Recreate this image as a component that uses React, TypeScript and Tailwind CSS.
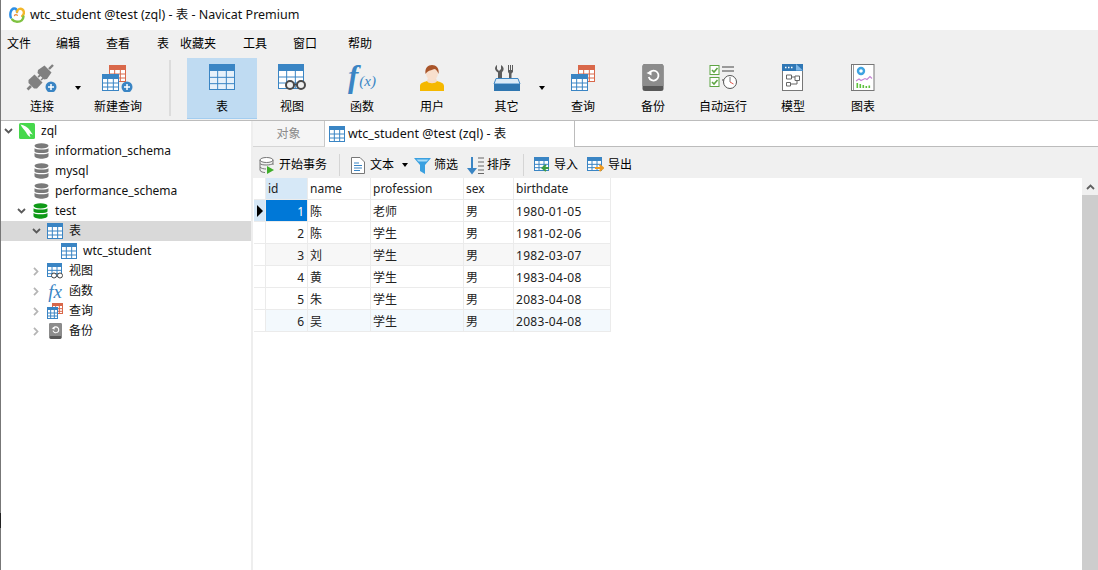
import type { ReactNode } from 'react'

const BLUE = '#3a85c4'
const RED = '#d9684a'

// table glyph used all over the app, header band + grid
function GridGlyph({ x = 0, y = 0, w = 26, h = 26, color = BLUE, fill = '#ffffff' }: { x?: number; y?: number; w?: number; h?: number; color?: string; fill?: string }) {
  const head = Math.round(h * 0.27)
  const rowH = (h - head) / 3
  const colW = w / 3
  return (
    <g>
      <rect x={x + 0.5} y={y + 0.5} width={w - 1} height={h - 1} fill={fill} stroke={color} />
      <path d={`M${x} ${y + head}v${-head + 2}a2 2 0 0 1 2 -2h${w - 4}a2 2 0 0 1 2 2v${head - 2}z`} fill={color} />
      <path
        d={`M${x + colW} ${y + head}V${y + h}M${x + colW * 2} ${y + head}V${y + h}M${x} ${y + head + rowH}H${x + w}M${x} ${y + head + rowH * 2}H${x + w}`}
        stroke={color}
        strokeWidth={1}
        fill="none"
      />
    </g>
  )
}

function PlusBadge({ cx, cy }: { cx: number; cy: number }) {
  return (
    <g>
      <circle cx={cx} cy={cy} r={5.5} fill="#3a85c4" />
      <path d={`M${cx - 3} ${cy}h6M${cx} ${cy - 3}v6`} stroke="#fff" strokeWidth={1.5} />
    </g>
  )
}

function TableIcon({ size = 26, fill = '#ffffff' }: { size?: number; fill?: string }) {
  return (
    <svg width={size} height={size} viewBox={`0 0 ${size} ${size}`}>
      <GridGlyph w={size} h={size} fill={fill} />
    </svg>
  )
}

function ConnectIcon() {
  return (
    <svg width={32} height={28} viewBox="0 0 32 28">
      <g fill="#808080">
        <path d="M12 6 18.500 1.500 25.500 8.500 21 15 18 15.500 11.500 9Z" />
        <path d="M23 5 27 1" stroke="#808080" strokeWidth={2.4} />
        <path d="M2.500 16 8.500 10.500 16.500 18.500 11 24.500 8 24.500 2.500 19Z" />
        <path d="M12 13 16.500 9.500M15 16 19 12.500" stroke="#808080" strokeWidth={1.6} />
        <path d="M5 22 1.500 25.500" stroke="#808080" strokeWidth={2.6} />
      </g>
      <PlusBadge cx={25} cy={23} />
    </svg>
  )
}

function NewQueryIcon() {
  return (
    <svg width={32} height={28} viewBox="0 0 32 28">
      <GridGlyph x={7} y={1} w={17} h={17} color={RED} />
      <GridGlyph x={0} y={10} w={17} h={17} />
      <PlusBadge cx={25} cy={23} />
    </svg>
  )
}

function ViewIcon() {
  return (
    <svg width={28} height={28} viewBox="0 0 28 28">
      <GridGlyph w={26} h={25} />
      <circle cx={12} cy={21} r={4} fill="#f0f0f0" stroke="#4a4a4a" strokeWidth={2} />
      <circle cx={23} cy={21} r={4} fill="#f0f0f0" stroke="#4a4a4a" strokeWidth={2} />
      <path d="M16 20.500h3" stroke="#4a4a4a" strokeWidth={1.6} />
    </svg>
  )
}

function FuncIcon() {
  return (
    <div className="flex items-end h-7 text-[#3a85c4] font-['Liberation_Serif',serif] italic leading-none">
      <span className="text-[31px] font-bold">f</span>
      <span className="text-[15px] mb-[3px] ml-[1px]">(x)</span>
    </div>
  )
}

function UserIcon() {
  return (
    <svg width={26} height={28} viewBox="0 0 26 28">
      <path d="M1 27v-5c0-3 4-4 7-5h10c3 1 7 2 7 5v5z" fill="#f5b800" />
      <path d="M8 17c1 3 9 3 10 0l-1-3H9z" fill="#f6dcc8" />
      <ellipse cx={13} cy={9} rx={6} ry={7.5} fill="#f8dfcd" />
      <path d="M6.500 10C5.500 4 9 1 13 1s7.500 3 6.500 9c-1-3-2.500-5-4.500-5-2 1.500-6 1-8.500 5z" fill="#a9552a" />
    </svg>
  )
}

function ToolsIcon() {
  return (
    <svg width={28} height={28} viewBox="0 0 28 28">
      <path d="M4 1v4l2 2 2-2V1c2 1 3 3 2.500 5-.3 1-1.500 2-1.500 2.500V20H5V8.500C3.500 7.500 2 6 2 4.500 2 3 3 1.500 4 1z" fill="#5c5c5c" />
      <path d="M15 1h1v5h1V1h1v5h1V1h1v7l-1.500 1.500V20h-2.500V9.500L15 8z" fill="#5c5c5c" />
      <path d="M3 14.500H25L27 20H1z" fill="#dcebf7" stroke="#3a85c4" />
      <rect x={1} y={20} width={26} height={7} fill="#2f76b0" />
    </svg>
  )
}

function QueryIcon({ small }: { small?: boolean }) {
  if (small) {
    return (
      <svg width={16} height={16} viewBox="0 0 16 16">
        <GridGlyph x={5} y={0} w={11} h={11} color={RED} />
        <GridGlyph x={0} y={4} w={11} h={12} />
      </svg>
    )
  }
  return (
    <svg width={26} height={28} viewBox="0 0 26 28">
      <GridGlyph x={8} y={1} w={17} h={17} color={RED} />
      <GridGlyph x={1} y={10} w={17} h={17} />
    </svg>
  )
}

function BackupIcon({ size = 22 }: { size?: number }) {
  return (
    <svg width={size} height={(size * 27) / 22} viewBox="0 0 22 27">
      <rect x={0.5} width={21} height={27} rx={2.500} fill="#585858" />
      <path d="M3 0h16a2.500 2.500 0 0 1 2.500 2.500V22H.5V2.500A2.500 2.500 0 0 1 3 0z" fill="#8c8c8c" />
      <path d="M7.500 8.500a5 5 0 1 1-.8 4.500" fill="none" stroke="#fff" strokeWidth={1.8} />
      <path d="M4.500 9 9.500 6.500 9.500 11.500z" fill="#fff" />
    </svg>
  )
}

function AutoRunIcon() {
  const box = (y: number) => (
    <g>
      <rect x={1} y={y} width={9} height={9} fill="#fff" stroke="#5fa544" />
      <path d={`M3 ${y + 4.500}l2 2 3.500-4`} fill="none" stroke="#5fa544" strokeWidth={1.6} />
    </g>
  )
  return (
    <svg width={28} height={26} viewBox="0 0 28 26">
      {box(1.5)}
      {box(13.5)}
      <path d="M13 3h12M13 7h12M13 16h2" stroke="#9a9a9a" strokeWidth={1.8} />
      <circle cx={21} cy={18} r={6.500} fill="#fff" stroke="#555" />
      <path d="M21 13v5" stroke="#777" />
      <path d="M21 18l3.500 2" stroke="#e4574c" />
    </svg>
  )
}

function ModelIcon() {
  return (
    <svg width={22} height={27} viewBox="0 0 22 27">
      <rect x={0.5} y={0.5} width={20} height={26} fill="#fff" stroke="#777" />
      <rect width={21} height={7} fill="#2f77b5" />
      <path d="M14 0l7 6.500h-7z" fill="#7db6e6" />
      <path d="M3 3.500h1.500M6 3.500h1.500M9 3.500h1.500" stroke="#fff" strokeWidth={1.400} />
      <path d="M4.500 11h5v4h-5zM13 12h4.500v4.500H13zM4.500 18.500h4v3.500h-4z" fill="#fff" stroke="#666" />
      <path d="M9.500 13H13M15 16.500v3.500H8.500" fill="none" stroke="#666" />
    </svg>
  )
}

function ChartIcon() {
  return (
    <svg width={24} height={27} viewBox="0 0 24 27">
      <rect x={0.5} y={0.5} width={22.500} height={26} fill="#fff" stroke="#777" />
      <path d="M2.500 1v25" stroke="#999" />
      <circle cx={10} cy={7} r={3} fill="none" stroke="#3ea3e0" strokeWidth={2.400} />
      <path d="M5 17l3-2 2 1.500 4-2 2 1 3-3 2 2" fill="none" stroke="#c583d4" strokeWidth={1.100} />
      <path d="M5.500 19h1.600v5H5.500zM8.500 20h1.600v4H8.500zM11.500 21h1.600v3h-1.600zM14.500 22h1.600v2h-1.600zM17.500 21.500h1.600V24h-1.600z" fill="#5ec23c" />
    </svg>
  )
}

function AppLogo() {
  return (
    <svg width={16} height={16} viewBox="0 0 16 16" fill="none" strokeWidth={2.4} strokeLinecap="round">
      <path d="M1.800 10.500C.5 6.500 2 1.800 5 1.500c2-.2 3 1.200 3 3.500" stroke="#2d8fe6" />
      <path d="M8 5c.3-3 3.500-4.200 5.500-2.500 2 1.800 1.800 5-.3 6.500" stroke="#f3b72a" />
      <path d="M14.500 9.500c-.3 3.500-3 5.300-6.500 5.300-2 0-3.700-.8-4.800-2.300" stroke="#7fc241" />
      <path d="M5.500 8.500c.8-1 2-1 2.800-.3" stroke="#f08a3c" strokeWidth={1.300} />
    </svg>
  )
}

function DbIcon({ color }: { color: string }) {
  return (
    <svg width={15} height={16} viewBox="0 0 15 16">
      <ellipse cx={7.500} cy={2.800} rx={7} ry={2.600} fill={color} />
      <path d="M.5 5.200c1 1.800 13 1.800 14 0v3.200c-1 2-13 2-14 0z" fill={color} />
      <path d="M.5 10c1 1.800 13 1.800 14 0v3.200c-1 3.300-13 3.300-14 0z" fill={color} />
    </svg>
  )
}

function MysqlIcon() {
  return (
    <svg width={16} height={16} viewBox="0 0 16 16">
      <rect width={16} height={16} rx={1.500} fill="#46d84c" />
      <path d="M1.500 1.500C5 2 9 4 11 7.500c.5 1 1.500 2.500 3 4-1.500 0-2.500-.5-3.500-1.200.2 1.200.4 2.500 1 4-2-1-3.500-3-4.500-5C5.500 7 3 5 1.500 1.500z" fill="#fff" />
    </svg>
  )
}

function SmallViewIcon() {
  return (
    <svg width={16} height={16} viewBox="0 0 16 16">
      <GridGlyph w={15} h={14} />
      <circle cx={7} cy={12.500} r={2.500} fill="#fff" stroke="#444" />
      <circle cx={13} cy={12.500} r={2.500} fill="#fff" stroke="#444" />
    </svg>
  )
}

function Chevron({ open }: { open?: boolean }) {
  return open ? (
    <svg width={9} height={6} viewBox="0 0 9 6">
      <path d="M1 1l3.500 3.500L8 1" fill="none" stroke="#5a5a5a" strokeWidth={1.800} />
    </svg>
  ) : (
    <svg width={6} height={9} viewBox="0 0 6 9">
      <path d="M1 .8 4.500 4.500 1 8.200" fill="none" stroke="#b5b5b5" strokeWidth={1.800} />
    </svg>
  )
}

function Caret() {
  return <div className="w-0 h-0 border-x-[3.5px] border-x-transparent border-t-[4px] border-t-black" />
}

function ToolButton({ icon, label, width = 'w-[70px]', active }: { icon: ReactNode; label: string; width?: string; active?: boolean }) {
  return (
    <div className={`${width} h-[61px] shrink-0 flex flex-col items-center ${active ? 'bg-[#bfdbf2] border-b border-b-[#a3cdf0]' : ''}`}>
      <div className="h-[36px] pt-[6px] flex items-start justify-center">{icon}</div>
      <div className="mt-[5px] text-[12px] leading-[16px] text-black whitespace-nowrap">{label}</div>
    </div>
  )
}

function TreeRow({ pad, chevron, icon, label, gap = 'ml-[6px]', selected }: { pad: string; chevron?: ReactNode; icon: ReactNode; label: string; gap?: string; selected?: boolean }) {
  return (
    <div className={`h-5 flex items-center ${pad} ${selected ? 'bg-[#d9d9d9]' : ''}`}>
      {chevron && <div className="w-4 pr-[6px] flex justify-center">{chevron}</div>}
      <div className="w-4 flex justify-center">{icon}</div>
      <span className={`${gap} text-[12px] leading-5 text-[#111] whitespace-nowrap`}>{label}</span>
    </div>
  )
}

const menus = [
  { t: '文件', w: 'w-[49px]' },
  { t: '编辑', w: 'w-[50px]' },
  { t: '查看', w: 'w-[51px]' },
  { t: '表', w: 'w-[23px]' },
  { t: '收藏夹', w: 'w-[63px]' },
  { t: '工具', w: 'w-[50px]' },
  { t: '窗口', w: 'w-[55px]' },
  { t: '帮助', w: 'w-[49px]' },
]

const columns = ['id', 'name', 'profession', 'sex', 'birthdate']

const rows = [
  { id: 1, name: '陈', job: '老师', sex: '男', date: '1980-01-05', bg: '' },
  { id: 2, name: '陈', job: '学生', sex: '男', date: '1981-02-06', bg: '' },
  { id: 3, name: '刘', job: '学生', sex: '男', date: '1982-03-07', bg: 'bg-[#f7f7f7]' },
  { id: 4, name: '黄', job: '学生', sex: '男', date: '1983-04-08', bg: '' },
  { id: 5, name: '朱', job: '学生', sex: '男', date: '2083-04-08', bg: '' },
  { id: 6, name: '吴', job: '学生', sex: '男', date: '2083-04-08', bg: 'bg-[#f3f9fd]' },
]

const cell = 'h-[22px] border-r border-b border-[#ebebeb] pl-[2px] text-[12px] text-[#222] whitespace-nowrap overflow-hidden'

export default function App() {
  return (
    <div className="w-[1098px] h-[570px] flex overflow-hidden bg-white font-['Noto_Sans','Noto_Sans_CJK_SC',sans-serif]">
      <div className="w-px h-full bg-[#777] shrink-0">
        <div className="mt-[513px] h-[15px] bg-[#222]" />
      </div>

      <div className="flex-1 min-w-0 flex flex-col">
        {/* title bar */}
        <div className="h-[30px] shrink-0 flex items-center pl-[8px] bg-white">
          <AppLogo />
          <span className="ml-[5px] text-[12.5px] text-[#111] whitespace-nowrap">wtc_student @test (zql) - 表 - Navicat Premium</span>
        </div>

        {/* menu */}
        <div className="h-[26px] shrink-0 flex items-center pl-[6px] pt-[2px] bg-[#f0f0f0]">
          {menus.map(m => (
            <div key={m.t} className={`${m.w} shrink-0 text-[12px] text-black`}>{m.t}</div>
          ))}
        </div>

        {/* main toolbar */}
        <div className="h-[65px] shrink-0 flex items-start pt-[2px] pl-[9px] bg-[#f0f0f0] border-b border-b-[#bcbcbc]">
          <ToolButton icon={<ConnectIcon />} label="连接" width="w-[64px]" />
          <div className="w-[9px] pr-[2px] h-[61px] shrink-0 flex justify-center pt-[28px]"><Caret /></div>
          <ToolButton icon={<NewQueryIcon />} label="新建查询" />
          <div className="w-[2px] h-[56px] mt-[2px] ml-[16px] mr-[16px] shrink-0 bg-[#dcdcdc]" />
          <ToolButton icon={<TableIcon fill="#e6f1fa" />} label="表" active />
          <ToolButton icon={<ViewIcon />} label="视图" />
          <ToolButton icon={<FuncIcon />} label="函数" />
          <ToolButton icon={<UserIcon />} label="用户" />
          <div className="ml-[6px]" />
          <ToolButton icon={<ToolsIcon />} label="其它" width="w-[67px]" />
          <div className="w-[10px] -ml-[1px] mr-[-1px] h-[61px] shrink-0 flex justify-start pt-[28px]"><Caret /></div>
          <ToolButton icon={<QueryIcon />} label="查询" />
          <ToolButton icon={<BackupIcon />} label="备份" />
          <ToolButton icon={<AutoRunIcon />} label="自动运行" />
          <ToolButton icon={<ModelIcon />} label="模型" />
          <ToolButton icon={<ChartIcon />} label="图表" />
        </div>

        <div className="flex-1 min-h-0 flex">
          {/* connection tree */}
          <div className="w-[250px] shrink-0 bg-white">
            <TreeRow pad="pl-[2px]" chevron={<Chevron open />} icon={<MysqlIcon />} label="zql" />
            <TreeRow pad="pl-[32px]" icon={<DbIcon color="#7a7a7a" />} label="information_schema" />
            <TreeRow pad="pl-[32px]" icon={<DbIcon color="#7a7a7a" />} label="mysql" />
            <TreeRow pad="pl-[32px]" icon={<DbIcon color="#7a7a7a" />} label="performance_schema" />
            <TreeRow pad="pl-[15px]" chevron={<Chevron open />} icon={<DbIcon color="#0f9a17" />} label="test" gap="ml-[7px]" />
            <TreeRow pad="pl-[30px]" chevron={<Chevron open />} icon={<TableIcon size={16} />} label="表" selected />
            <TreeRow pad="pl-[60px]" icon={<TableIcon size={16} />} label="wtc_student" />
            <TreeRow pad="pl-[30px]" chevron={<Chevron />} icon={<SmallViewIcon />} label="视图" />
            <TreeRow
              pad="pl-[30px]"
              chevron={<Chevron />}
              icon={<span className="font-['Liberation_Serif',serif] italic text-[19px] leading-none text-[#3a85c4]">fx</span>}
              label="函数"
            />
            <TreeRow pad="pl-[30px]" chevron={<Chevron />} icon={<QueryIcon small />} label="查询" />
            <TreeRow pad="pl-[30px]" chevron={<Chevron />} icon={<BackupIcon size={13} />} label="备份" />
          </div>
          <div className="w-[2px] shrink-0 bg-[#eeeeee]" />

          <div className="flex-1 min-w-0 flex flex-col">
            {/* tabs */}
            <div className="h-[26px] shrink-0 flex bg-[#f0f0f0]">
              <div className="w-[72px] shrink-0 flex items-center justify-center bg-[#f5f5f5] border-r border-r-[#c8c8c8] border-b border-b-[#d5d5d5] text-[12px] text-[#8a8a8a]">对象</div>
              <div className="w-[249px] shrink-0 flex items-center pl-[4px] bg-white">
                <TableIcon size={16} />
                <span className="ml-[3px] text-[12.5px] text-[#111] whitespace-nowrap">wtc_student @test (zql) - 表</span>
              </div>
              <div className="flex-1 bg-white border-l border-l-[#bcbcbc] border-b border-b-[#bcbcbc]" />
            </div>

            {/* object toolbar */}
            <div className="h-[31px] shrink-0 flex items-center pl-[6px] pt-[5px] bg-[#f0f0f0] text-[12px] text-black whitespace-nowrap">
              <svg width={16} height={17} viewBox="0 0 16 17">
                <ellipse cx={7.500} cy={3} rx={6.500} ry={2.500} fill="#fff" stroke="#777" />
                <path d="M1 3v10c0 2 4 2.500 5 2.500M14 3v5M1 6.500c1 2 11 2 13 0M1 10c1 1.500 4 2 6 2" fill="none" stroke="#777" />
                <path d="M8 9l7 4-7 4z" fill="#3fae2a" />
              </svg>
              <span className="ml-[4px]">开始事务</span>
              <div className="w-px h-[22px] ml-[12px] mr-[11px] bg-[#d5d5d5]" />
              <svg width={14} height={17} viewBox="0 0 14 17">
                <path d="M.5.5h8.500l4.500 4.500v11.500H.5z" fill="#fff" stroke="#777" />
                <path d="M3 6h5M3 8.500h8M3 11h8M3 13.500h6" stroke="#3a85c4" />
              </svg>
              <span className="ml-[5px]">文本</span>
              <div className="ml-[8px] mr-[6px]"><Caret /></div>
              <svg width={17} height={17} viewBox="0 0 17 17">
                <path d="M0 1h17l-6 7v9l-5-3V8z" fill="#3aa0e0" />
                <path d="M2.500 2.500h12l-2 2h-8z" fill="#a8dbf7" />
              </svg>
              <span className="ml-[3px]">筛选</span>
              <svg className="ml-[9px]" width={17} height={19} viewBox="0 0 17 19">
                <path d="M5 1v13" stroke="#3a85c4" strokeWidth={2} />
                <path d="M0 12h10l-5 6.500z" fill="#3a85c4" />
                <path d="M11 2h6M11 6h6M11 10h6M11 14h6M11 17.500h6" stroke="#666" />
              </svg>
              <span className="ml-[3px]">排序</span>
              <div className="w-px h-[22px] ml-[12px] mr-[10px] bg-[#d5d5d5]" />
              <svg width={16} height={16} viewBox="0 0 16 16">
                <GridGlyph w={15} h={14} />
                <path d="M15 11H9M12 8l-3.500 3 3.500 3" fill="none" stroke="#3e9b44" strokeWidth={2} />
              </svg>
              <span className="ml-[4px]">导入</span>
              <svg className="ml-[9px]" width={17} height={16} viewBox="0 0 17 16">
                <GridGlyph w={15} h={14} />
                <path d="M8 11h7M12.500 8l3.500 3-3.500 3" fill="none" stroke="#ef9a1f" strokeWidth={2} />
              </svg>
              <span className="ml-[4px]">导出</span>
            </div>

            {/* data grid */}
            <div className="flex-1 min-h-0 flex bg-white">
              <div className="flex-1 min-w-0 pl-[1px]">
                <div className="w-[357px] grid grid-cols-[12px_42px_63px_93px_50px_97px]">
                  <div className={`${cell} bg-white`} />
                  {columns.map((c, i) => (
                    <div key={c} className={`${cell} leading-[21px] ${i === 0 ? 'bg-[#d6e8f7]' : 'bg-white'}`}>{c}</div>
                  ))}
                  {rows.map(r => (
                    <div key={r.id} className="contents">
                      <div className={`${cell} flex items-center !pl-[3px] ${r.id === 1 ? 'bg-[#d6e8f7]' : 'bg-white'}`}>
                        {r.id === 1 && <div className="w-0 h-0 border-y-[6px] border-y-transparent border-l-[6px] border-l-black" />}
                      </div>
                      <div className={`${cell} leading-[23px] text-right pr-[3px] ${r.id === 1 ? '!text-white bg-[#0078d7]' : r.bg}`}>{r.id}</div>
                      <div className={`${cell} leading-[23px] ${r.bg}`}>{r.name}</div>
                      <div className={`${cell} leading-[23px] ${r.bg}`}>{r.job}</div>
                      <div className={`${cell} leading-[23px] ${r.bg}`}>{r.sex}</div>
                      <div className={`${cell} leading-[23px] tracking-[0.3px] ${r.bg}`}>{r.date}</div>
                    </div>
                  ))}
                </div>
              </div>
              {/* scrollbar */}
              <div className="w-[16px] shrink-0 flex flex-col bg-[#f0f0f0]">
                <div className="h-[17px] shrink-0 flex items-center justify-center">
                  <svg width={9} height={6} viewBox="0 0 9 6">
                    <path d="M1 5l3.500-3.500L8 5" fill="none" stroke="#606060" strokeWidth={1.800} />
                  </svg>
                </div>
                <div className="flex-1 bg-[#cdcdcd]" />
              </div>
            </div>
          </div>
        </div>
      </div>
    </div>
  )
}
